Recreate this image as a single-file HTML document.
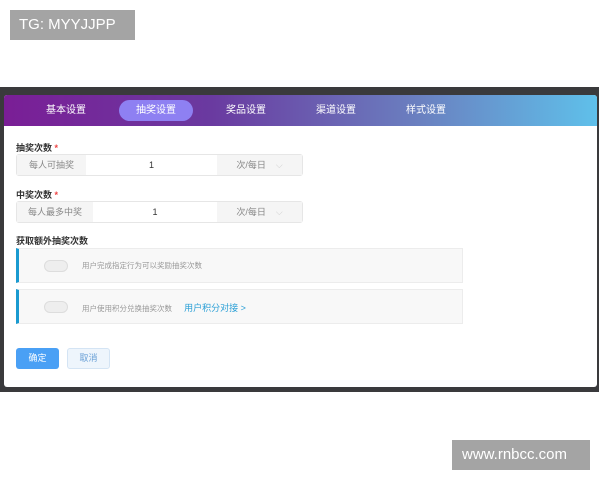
<!DOCTYPE html>
<html><head><meta charset="utf-8"><style>
*{margin:0;padding:0;box-sizing:border-box}
body{width:600px;height:480px;background:#fff;position:relative;overflow:hidden;font-family:"Liberation Sans","Noto Sans CJK SC",sans-serif}
.dark{position:absolute;left:0;top:87px;width:599px;height:305px;background:#3a3a3c}
.modal{position:absolute;left:4px;top:95px;width:593px;height:292px;background:#fff;border-radius:3px;overflow:hidden}
.hdr{height:31px;background:linear-gradient(90deg,#7a1e96 0%,#6a3aa0 35%,#6a80c0 70%,#5fc0ea 100%);position:relative}
.tab{position:absolute;top:5px;height:21px;line-height:21px;font-size:10px;color:#fff;text-align:center;width:74px}
.tab.act{background:#8e80f2;border-radius:11px}
.lbl{position:absolute;font-size:9px;color:#333;font-weight:bold}
.lbl span{color:#e44}
.row{position:absolute;left:12px;width:287px;height:22px;border:1px solid #e6e6e6;border-radius:3px;font-size:9px;color:#888;display:flex}
.row div{height:100%;line-height:20px;text-align:center}
.box{position:absolute;left:12px;width:447px;height:35px;background:#f8f8f8;border:1px solid #ececec;border-left:3px solid #1a9ad0;font-size:7.5px;color:#999}
.sw{position:absolute;left:25px;top:11px;width:24px;height:12px;border-radius:6px;background:#eee;border:1px solid #ddd}
.wm{position:absolute;background:#a4a4a4;color:#fff;font-size:15px;line-height:30px;padding-left:9px}
</style></head><body>
<div class="wm" style="left:10px;top:10px;width:125px;height:30px">TG: MYYJJPP</div>
<div class="dark"></div>
<div class="modal">
<div class="hdr">
<div class="tab" style="left:25px">基本设置</div>
<div class="tab act" style="left:115px">抽奖设置</div>
<div class="tab" style="left:205px">奖品设置</div>
<div class="tab" style="left:295px">渠道设置</div>
<div class="tab" style="left:385px">样式设置</div>
</div>
<div class="lbl" style="left:12px;top:46px">抽奖次数 <span>*</span></div>
<div class="row" style="top:59px"><div style="width:69px;background:#f5f5f5">每人可抽奖</div><div style="width:131px;color:#333">1</div><div style="width:85px;background:#f5f5f5">次/每日 &nbsp;&nbsp;&nbsp;<span style="color:#ccc">⌵</span></div></div>
<div class="lbl" style="left:12px;top:93px">中奖次数 <span>*</span></div>
<div class="row" style="top:106px"><div style="width:76px;background:#f5f5f5">每人最多中奖</div><div style="width:124px;color:#333">1</div><div style="width:85px;background:#f5f5f5">次/每日 &nbsp;&nbsp;&nbsp;<span style="color:#ccc">⌵</span></div></div>
<div class="lbl" style="left:12px;top:139px">获取额外抽奖次数</div>
<div class="box" style="top:153px"><div class="sw"></div><div style="position:absolute;left:63px;top:11px">用户完成指定行为可以奖励抽奖次数</div></div>
<div class="box" style="top:194px"><div class="sw"></div><div style="position:absolute;left:63px;top:11px">用户使用积分兑换抽奖次数 <span style="color:#2a9fd6;font-size:9px;margin-left:10px">用户积分对接 &gt;</span></div></div>
<div style="position:absolute;left:12px;top:253px;width:43px;height:21px;background:#4aa0f5;border-radius:3px;color:#fff;font-size:9px;text-align:center;line-height:21px">确定</div>
<div style="position:absolute;left:63px;top:253px;width:43px;height:21px;background:#eef5fc;border:1px solid #d4e4f4;border-radius:3px;color:#6aa0d6;font-size:9px;text-align:center;line-height:19px">取消</div>
</div>
<div class="wm" style="left:452px;top:440px;width:138px;height:30px;padding-left:10px">www.rnbcc.com</div>
</body></html>
